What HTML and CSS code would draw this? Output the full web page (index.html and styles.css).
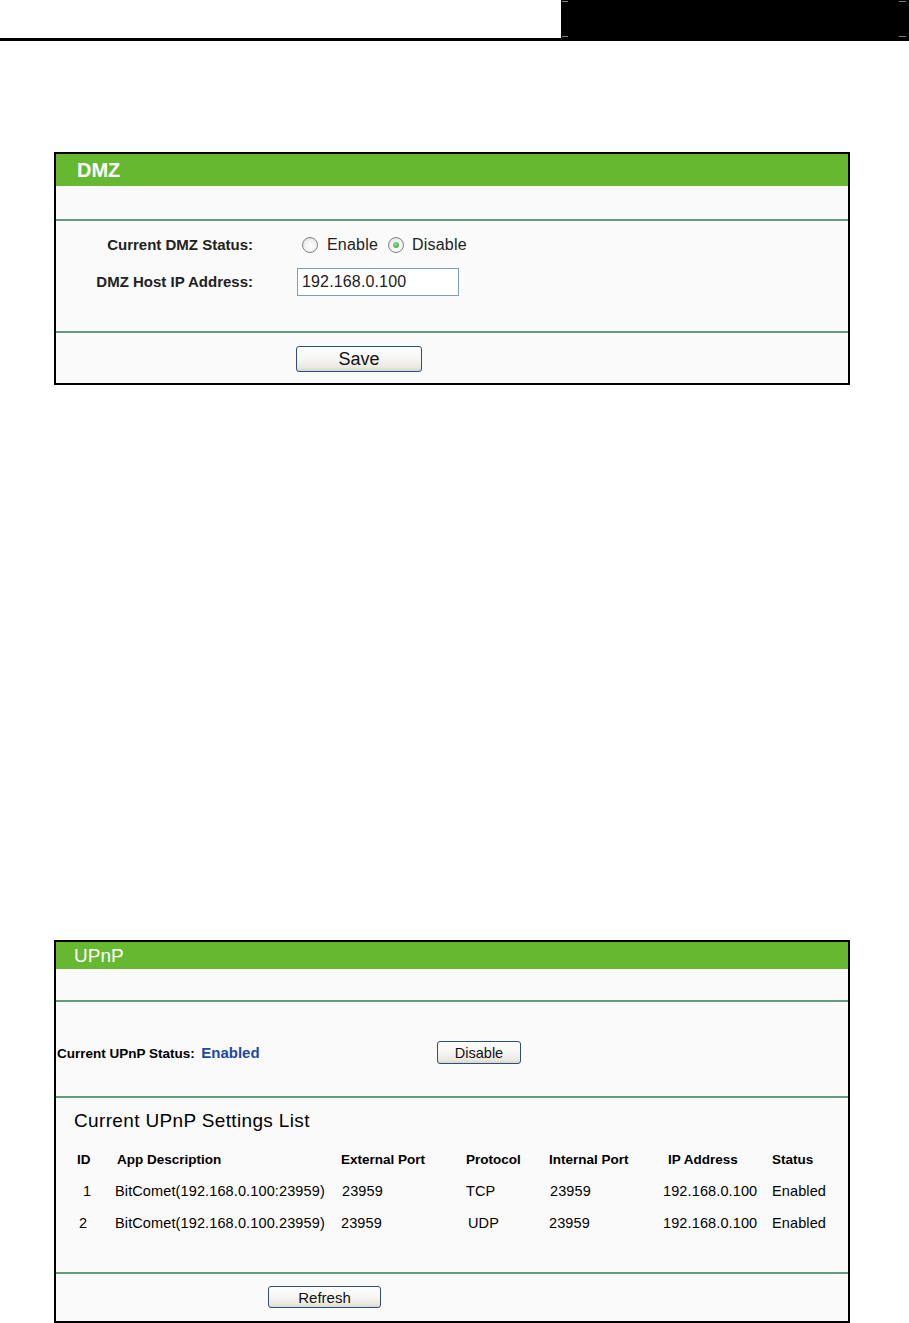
FILE: index.html
```html
<!DOCTYPE html>
<html lang="en">
<head>
<meta charset="utf-8">
<title>DMZ and UPnP</title>
<link rel="stylesheet" href="styles.css">
</head>
<body>
<header class="topbar">
  <div class="topbar-box"></div>
</header>
<main class="page">
  <section class="panel panel-dmz">
    <h1 class="panel-title title-dmz">DMZ</h1>
    <div class="panel-blank blank-dmz"></div>
    <div class="panel-body dmz-form">
      <div class="form-row">
        <span class="form-label">Current DMZ Status:</span>
        <span class="form-value">
          <label class="radio-opt"><input type="radio" name="dmz" class="radio"><span>Enable</span></label>
          <label class="radio-opt"><input type="radio" name="dmz" class="radio" checked><span>Disable</span></label>
        </span>
      </div>
      <div class="form-row">
        <span class="form-label">DMZ Host IP Address:</span>
        <span class="form-value"><input type="text" class="text-input" value="192.168.0.100"></span>
      </div>
    </div>
    <div class="panel-foot foot-dmz"><button class="btn btn-save" type="button">Save</button></div>
  </section>

  <section class="panel panel-upnp">
    <h1 class="panel-title title-upnp">UPnP</h1>
    <div class="panel-blank blank-upnp"></div>
    <div class="panel-body upnp-status">
      <div class="status-text"><b class="status-label">Current UPnP Status:</b> <b class="status-value">Enabled</b></div>
      <button class="btn btn-disable" type="button">Disable</button>
    </div>
    <div class="panel-body upnp-list">
      <h2 class="list-title">Current UPnP Settings List</h2>
      <table class="upnp-table">
        <colgroup>
          <col class="c-id"><col class="c-app"><col class="c-ext"><col class="c-proto"><col class="c-int"><col class="c-ip"><col class="c-status">
        </colgroup>
        <thead>
          <tr>
            <th class="cell-id">ID</th>
            <th class="th-app">App Description</th>
            <th>External Port</th>
            <th>Protocol</th>
            <th>Internal Port</th>
            <th class="th-ip">IP Address</th>
            <th>Status</th>
          </tr>
        </thead>
        <tbody>
          <tr>
            <td class="cell-id id-1">1</td>
            <td>BitComet(192.168.0.100:23959)</td>
            <td class="td-ext">23959</td>
            <td>TCP</td>
            <td class="td-int">23959</td>
            <td class="td-ip">192.168.0.100</td>
            <td>Enabled</td>
          </tr>
          <tr>
            <td class="cell-id id-2">2</td>
            <td>BitComet(192.168.0.100.23959)</td>
            <td>23959</td>
            <td class="td-udp">UDP</td>
            <td>23959</td>
            <td>192.168.0.100</td>
            <td>Enabled</td>
          </tr>
        </tbody>
      </table>
    </div>
    <div class="panel-foot foot-upnp"><button class="btn btn-refresh" type="button">Refresh</button></div>
  </section>
</main>
</body>
</html>
```
FILE: styles.css
```css
html, body {
  margin: 0;
  padding: 0;
  background: #fff;
}
body {
  font-family: "Liberation Sans", Arial, sans-serif;
  color: #000;
}

/* top bar */
.topbar {
  display: flex;
  justify-content: flex-end;
  height: 38px;
  border-bottom: 3px solid #000;
}
.topbar-box {
  width: 348px;
  height: 38px;
  background:
    linear-gradient(#808080, #808080) 1px 1px / 6px 1px no-repeat,
    linear-gradient(#808080, #808080) 1px 36px / 6px 1px no-repeat,
    linear-gradient(#808080, #808080) 338px 1px / 7px 1px no-repeat,
    linear-gradient(#808080, #808080) 338px 36px / 7px 1px no-repeat,
    #000;
}

.page {
  padding: 111px 0 0 54px;
}

/* panels */
.panel {
  width: 796px;
  box-sizing: border-box;
  border: 2px solid #000;
  background: #fafafa;
}
.panel-upnp {
  margin-top: 555px;
}
.panel-title {
  margin: 0;
  background: #67b831;
  color: #fff;
}
.title-dmz {
  height: 32px;
  line-height: 32px;
  padding-left: 21px;
  font-size: 20px;
  font-weight: bold;
}
.title-upnp {
  height: 27px;
  line-height: 27px;
  padding-left: 18px;
  font-size: 19px;
  font-weight: normal;
}
.blank-dmz { height: 33px; }
.blank-upnp { height: 31px; }

.panel-body,
.panel-foot {
  border-top: 2px solid #5e9d7d;
}

/* DMZ form */
.dmz-form {
  padding: 10px 0 35px;
  display: flex;
  flex-direction: column;
  gap: 9px;
  color: #222;
}
.form-row {
  display: grid;
  grid-template-columns: 197px auto;
  column-gap: 44px;
  align-items: center;
  height: 28px;
}
.form-label {
  text-align: right;
  font-weight: bold;
  font-size: 15px;
  position: relative;
  top: -1px;
}
.form-value {
  display: flex;
  align-items: center;
}
.radio-opt {
  display: flex;
  align-items: center;
  font-size: 16px;
  letter-spacing: 0.2px;
  margin-left: 5px;
}
.radio-opt + .radio-opt {
  margin-left: 10px;
}
.radio-opt span {
  margin-left: 9px;
}
.radio-opt + .radio-opt span {
  margin-left: 8px;
}
.radio {
  appearance: none;
  -webkit-appearance: none;
  margin: 0;
  width: 16px;
  height: 16px;
  box-sizing: border-box;
  border-radius: 50%;
  border: 1px solid #7e848c;
  background: radial-gradient(circle at 55% 60%, #fff 0, #f2f2f2 50%, #cfd2d6 100%);
  display: grid;
  place-items: center;
}
.radio:checked::after {
  content: "";
  width: 6px;
  height: 6px;
  border-radius: 50%;
  background: radial-gradient(circle at 40% 35%, #8fe08f, #2a9a2a);
}
.text-input {
  width: 162px;
  height: 28px;
  box-sizing: border-box;
  border: 1px solid #7f9db9;
  padding: 0 0 0 4px;
  margin: 0;
  background: #fff;
  font-family: "Liberation Sans", Arial, sans-serif;
  font-size: 16px;
  letter-spacing: 0.15px;
  color: #222;
}

/* buttons */
.btn {
  box-sizing: border-box;
  border: 1px solid #2c4f7c;
  border-radius: 3px;
  background: linear-gradient(#ffffff 0%, #f5f5f2 50%, #eae8e1 85%, #d8d4c8 100%);
  font-family: "Liberation Sans", Arial, sans-serif;
  color: #111;
  padding: 0;
  margin: 0;
  cursor: pointer;
}
.foot-dmz {
  padding: 13px 0 11px 240px;
}
.btn-save {
  width: 126px;
  height: 26px;
  font-size: 18px;
}

/* UPnP status */
.upnp-status {
  display: grid;
  grid-template-columns: 380px auto;
  align-items: center;
  padding: 39px 0 32px 1px;
}
.status-label {
  font-size: 13.5px;
}
.status-value {
  font-size: 15px;
  color: #1d4aa2;
  margin-left: 2px;
}
.btn-disable {
  width: 84px;
  height: 23px;
  font-size: 14.5px;
  justify-self: start;
}

/* UPnP list */
.upnp-list {
  padding: 11px 0 33px 17px;
}
.list-title {
  margin: 0 0 10px 1px;
  height: 24px;
  line-height: 24px;
  font-size: 19px;
  letter-spacing: 0.35px;
  font-weight: normal;
}
.upnp-table {
  border-collapse: collapse;
  table-layout: fixed;
  width: 774px;
}
.c-id { width: 42px; }
.c-app { width: 226px; }
.c-ext { width: 125px; }
.c-proto { width: 83px; }
.c-int { width: 114px; }
.c-ip { width: 109px; }
.c-status { width: 75px; }
.upnp-table th,
.upnp-table td {
  height: 32px;
  padding: 0;
  text-align: left;
  white-space: nowrap;
  vertical-align: middle;
}
.upnp-table th {
  font-size: 13.5px;
  font-weight: bold;
}
.upnp-table td {
  font-size: 14.5px;
  letter-spacing: 0.12px;
}
.upnp-table .cell-id {
  text-align: left;
  padding-left: 4px;
}
.upnp-table .id-1 { padding-left: 10px; }
.upnp-table .id-2 { padding-left: 6px; }
.upnp-table .th-app { padding-left: 2px; }
.upnp-table .td-ext { padding-left: 1px; }
.upnp-table .td-udp { padding-left: 2px; }
.upnp-table .td-int { padding-left: 1px; }
.upnp-table .th-ip { padding-left: 5px; }

.foot-upnp {
  padding: 12px 0 13px 212px;
}
.btn-refresh {
  width: 113px;
  height: 22px;
  font-size: 15px;
}
```
